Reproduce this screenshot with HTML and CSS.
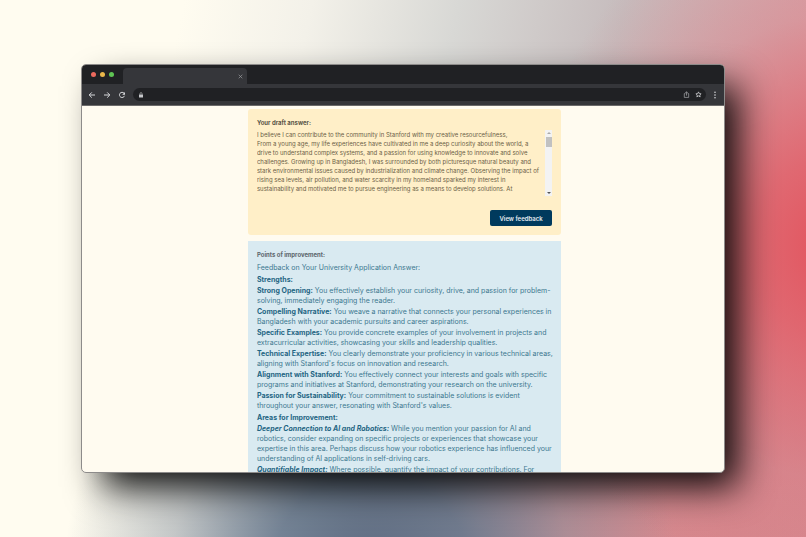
FILE: index.html
```html
<!DOCTYPE html>
<html lang="en">
<head>
	<meta charset="UTF-8">
	<title>Feedback</title>
	<link rel="stylesheet" href="styles.css">
</head>
<body>
<div class="browser">
	<div class="tabs">
		<span class="dot red"></span>
		<span class="dot yellow"></span>
		<span class="dot green"></span>
		<div class="tab">
			<button class="icon_btn close" aria-label="Close tab">
				<svg width="5" height="5" viewBox="0 0 5 5"><path d="M.7.7l3.6 3.6M4.3.7L.7 4.3" stroke="#9a9b9e" stroke-width=".7"/></svg>
			</button>
		</div>
	</div>
	<div class="toolbar">
		<button class="icon_btn" aria-label="Back">
			<svg width="8" height="8" viewBox="0 0 8 8"><path d="M7 4H1.200M3.800 1.400L1.200 4l2.600 2.600" fill="none" stroke="#d6d7da"/></svg>
		</button>
		<button class="icon_btn" aria-label="Forward">
			<svg width="8" height="8" viewBox="0 0 8 8"><path d="M1 4h5.800M4.200 1.400L6.800 4 4.200 6.600" fill="none" stroke="#d6d7da"/></svg>
		</button>
		<button class="icon_btn" aria-label="Reload">
			<svg width="8" height="8" viewBox="0 0 8 8"><path d="M6 2.200A2.600 2.600 0 1 0 6.500 4.800" fill="none" stroke="#d6d7da"/><path d="M7 .9v2.800H4.200z" fill="#d6d7da"/></svg>
		</button>
		<div class="address">
			<svg width="6" height="6" viewBox="0 0 6 6"><path d="M1 2.4h4v3.2H1z" fill="#c6c7ca"/><path d="M2 2.5V1.6a1 1 0 0 1 2 0v.9" fill="none" stroke="#c6c7ca" stroke-width=".6"/></svg>
			<input class="url" type="text" aria-label="Address">
			<button class="icon_btn" aria-label="Share">
				<svg width="7" height="7" viewBox="0 0 7 7"><path d="M2.4 2.6H1.3v3.8h4.4V2.6H4.6M3.5 4.6V.8M2.3 1.9L3.5.7l1.2 1.2" fill="none" stroke="#a9aaad" stroke-width=".7"/></svg>
			</button>
			<button class="icon_btn" aria-label="Bookmark">
				<svg width="7" height="7" viewBox="0 0 24 24"><path d="M12 3l2.700 6 6.300.6-4.800 4.200 1.500 6.400L12 16.800 6.300 20.200l1.500-6.400L3 9.600 9.300 9z" fill="none" stroke="#d6d7da" stroke-width="2.600"/></svg>
			</button>
		</div>
		<button class="icon_btn menu" aria-label="Menu">
			<svg width="4" height="8" viewBox="0 0 4 8"><g fill="#d6d7da"><circle cx="2" cy="1.200" r=".8"/><circle cx="2" cy="4" r=".8"/><circle cx="2" cy="6.800" r=".8"/></g></svg>
		</button>
	</div>
	<div class="page">
		<div class="card draft">
			<label class="title" for="answer">Your draft answer:</label>
			<div class="answer_box">
				<textarea id="answer" class="answer" rows="7" wrap="off">I believe I can contribute to the community in Stanford with my creative resourcefulness,
From a young age, my life experiences have cultivated in me a deep curiosity about the world, a
drive to understand complex systems, and a passion for using knowledge to innovate and solve
challenges. Growing up in Bangladesh, I was surrounded by both picturesque natural beauty and
stark environmental issues caused by industrialization and climate change. Observing the impact of
rising sea levels, air pollution, and water scarcity in my homeland sparked my interest in
sustainability and motivated me to pursue engineering as a means to develop solutions. At</textarea>
				<div class="scrollbar">
					<span class="arrow up"></span>
					<span class="thumb"></span>
					<span class="arrow down"></span>
				</div>
			</div>
			<button class="view">View feedback</button>
		</div>
		<div class="card points">
			<h2 class="title">Points of improvement:</h2>
			<div class="feedback">
				<p>Feedback on Your University Application Answer:</p>
				<h3>Strengths:</h3>
				<p><b>Strong Opening:</b> You effectively establish your curiosity, drive, and passion for problem-<br>solving, immediately engaging the reader.</p>
				<p><b>Compelling Narrative:</b> You weave a narrative that connects your personal experiences in<br>Bangladesh with your academic pursuits and career aspirations.</p>
				<p><b>Specific Examples:</b> You provide concrete examples of your involvement in projects and<br>extracurricular activities, showcasing your skills and leadership qualities.</p>
				<p><b>Technical Expertise:</b> You clearly demonstrate your proficiency in various technical areas,<br>aligning with Stanford's focus on innovation and research.</p>
				<p><b>Alignment with Stanford:</b> You effectively connect your interests and goals with specific<br>programs and initiatives at Stanford, demonstrating your research on the university.</p>
				<p><b>Passion for Sustainability:</b> Your commitment to sustainable solutions is evident<br>throughout your answer, resonating with Stanford's values.</p>
				<h3>Areas for Improvement:</h3>
				<p><b><i>Deeper Connection to AI and Robotics:</i></b> While you mention your passion for AI and<br>robotics, consider expanding on specific projects or experiences that showcase your<br>expertise in this area. Perhaps discuss how your robotics experience has influenced your<br>understanding of AI applications in self-driving cars.</p>
				<p><b><i>Quantifiable Impact:</i></b> Where possible, quantify the impact of your contributions. For</p>
			</div>
		</div>
	</div>
</div>
</body>
</html>
```

FILE: styles.css
```css
* { box-sizing: border-box; }
body { margin: 0; height: 100vh; padding: 64px 81px; overflow: hidden; font-family: Inter, "Liberation Sans", sans-serif; background: radial-gradient(ellipse 38% 66% at 103% 46%, #e2545e 0%, rgba(226,90,100,.8) 25%, rgba(222,115,125,.3) 65%, rgba(222,130,140,0) 100%), radial-gradient(ellipse 38% 55% at 46% 106%, #5d6a80 0%, rgba(96,114,136,.85) 32%, rgba(120,132,146,.4) 65%, rgba(160,170,174,0) 100%), radial-gradient(ellipse 45% 60% at 86% 105%, rgba(214,130,135,.9) 0%, rgba(205,130,138,.6) 50%, rgba(205,150,155,0) 100%), linear-gradient(102deg, #fffcf0 20%, #f3f1e9 34%, #d8d8d5 50%, #c6bcbd 68%, #d4a8ac 86%, #e09a9f 100%); }
h2, h3, p { margin: 0; }
button, input, textarea { font-family: inherit; padding: 0; border: 0; background: none; }

.browser { height: 100%; display: flex; flex-direction: column; overflow: hidden; border: 1px solid #8d8b8a; border-radius: 5px; background: #fffbf0; box-shadow: 17px 18px 36px -4px rgba(0,0,0,.95); }

.tabs { height: 19px; flex: none; display: flex; align-items: center; gap: 4px; padding-left: 9px; background: #202124; }
.dot { width: 5px; height: 5px; border-radius: 50%; }
.red { background: #ec6a5e; }
.yellow { background: #e9b64a; }
.green { background: #5fc454; }
.tab { width: 124px; height: 16px; margin-left: 5px; align-self: flex-end; display: flex; align-items: center; justify-content: flex-end; padding-right: 4px; border-radius: 4px 4px 0 0; background: #35363a; }

.icon_btn { display: flex; flex: none; }
.toolbar { height: 22px; flex: none; display: flex; align-items: center; gap: 7px; padding: 0 7px 0 6px; border-bottom: 1px solid #6b6a6a; background: #35363a; }
.address { flex: 1; height: 13px; display: flex; align-items: center; gap: 5px; padding: 0 4px 0 5px; border-radius: 7px; background: #202124; }
.url { flex: 1; min-width: 0; height: 9px; color: #d6d7da; font-size: 6px; }

.page { flex: 1; min-height: 0; display: flex; flex-direction: column; align-items: center; gap: 6px; padding: 3px 0 0 3px; overflow: hidden; }
.card { width: 49%; min-width: 313px; flex: none; padding: 9px; }
.title { display: block; font-size: 6px; line-height: 9px; font-weight: 700; color: #5c5648; }
.draft { display: flex; flex-direction: column; border-radius: 3px; background: #ffefc8; }
.answer_box { display: flex; height: 66px; margin-top: 3px; }
.answer { flex: 1; min-width: 0; resize: none; overflow: hidden; font-size: 6px; line-height: 9px; color: #6b6046; }
.scrollbar { width: 7px; display: flex; flex-direction: column; align-items: center; padding: 2px 0; background: #f3f3f3; }
.arrow { border: 2px solid transparent; }
.up { border-top: 0; border-bottom-color: #aaa; }
.down { margin-top: auto; border-bottom: 0; border-top-color: #555; }
.thumb { width: 6px; height: 10px; margin-top: 3px; background: #c1c1c1; }
.view { align-self: flex-end; width: 62px; height: 16px; margin-top: 14px; border-radius: 2px; background: #003a5d; color: #e6edf2; font-size: 6px; font-weight: 600; }

.points { background: #d9eaf1; }
.points .title { color: #5c666c; }
.feedback { display: flex; flex-direction: column; gap: 1px; margin-top: 4px; font-size: 7px; line-height: 10px; color: #3c7890; white-space: nowrap; }
.feedback h3 { margin-top: 1px; font-size: 7px; font-weight: 700; color: #1f6583; }
.feedback b { color: #1f6583; }
```
